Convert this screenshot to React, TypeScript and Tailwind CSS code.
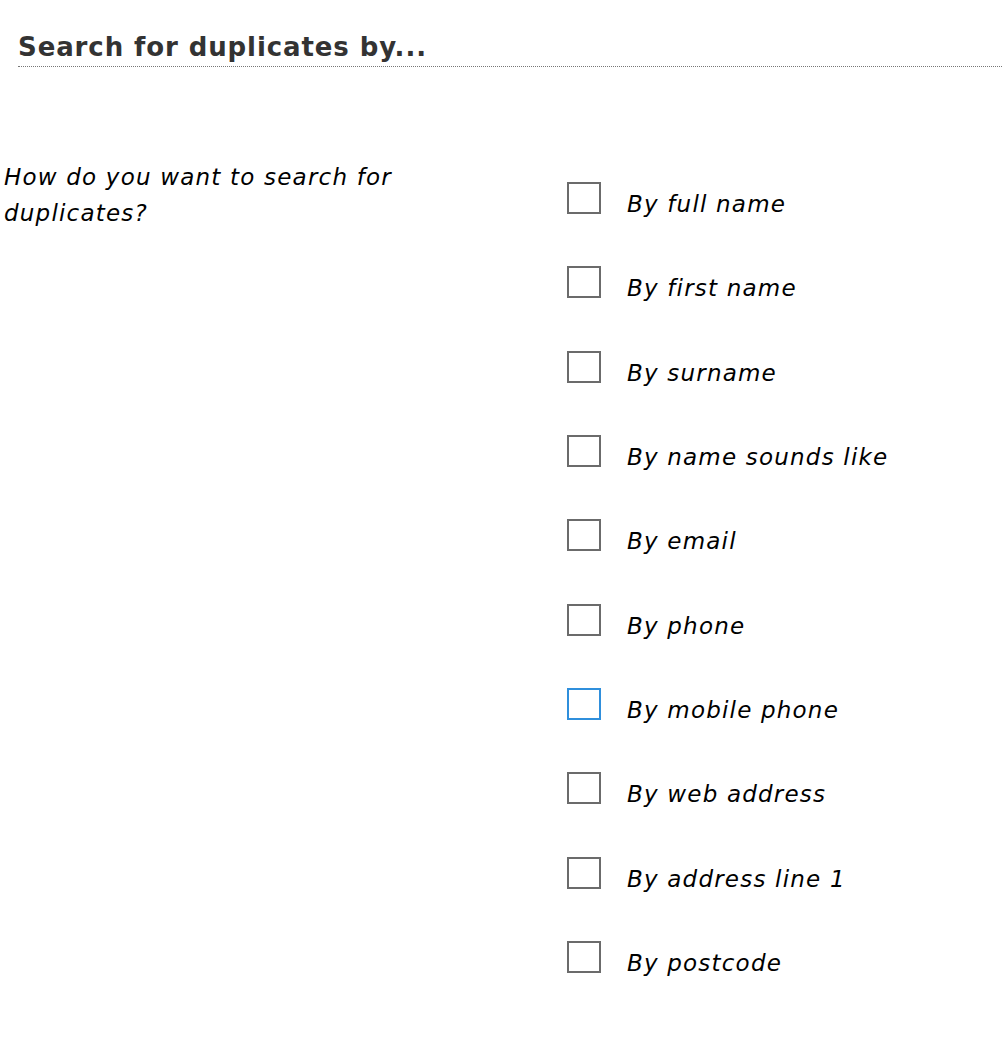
import React, { useState } from "react"

const options = [
    "By full name",
    "By first name",
    "By surname",
    "By name sounds like",
    "By email",
    "By phone",
    "By mobile phone",
    "By web address",
    "By address line 1",
    "By postcode",
]

// single checkbox row
const CheckRow: React.FC<{ label: string; focused?: boolean }> = ({ label, focused }) => {
    const [checked, setChecked] = useState(false)

    return (
        <label className="flex items-start h-[84.33px] cursor-pointer">
            <span
                onClick={() => setChecked(!checked)}
                className={`flex justify-center items-center w-[34px] h-[32px] border-2 bg-white ${
                    focused ? "border-[#2f8fdc]" : "border-[#6b6b6b]"
                }`}
            >
                {checked && <span className="block w-[15px] h-[15px] bg-[#333333]" />}
            </span>
            <span className="ml-[26px] mt-[6px] text-[23px] leading-[32px] tracking-[1.2px] italic text-black">
                {label}
            </span>
        </label>
    )
}

export default function App() {
    return (
        <div className="w-[1002px] h-[1053px] bg-white font-['Verdana','DejaVu_Sans',sans-serif]">
            <div className="pt-[30px] pl-[18px]">
                <h2 className="text-[26px] leading-[34px] tracking-[0.9px] font-bold text-[#333333] pb-[2px] border-b border-dotted border-[#777777]">
                    Search for duplicates by...
                </h2>
            </div>
            <div className="flex mt-[92px]">
                <div className="w-[567px] pl-[4px] pr-[110px] text-[23px] leading-[36px] tracking-[1.2px] italic text-black">
                    How do you want to search for duplicates?
                </div>
                <div className="flex flex-col mt-[23px]">
                    {options.map((item, index) => (
                        <CheckRow key={index} label={item} focused={index === 6} />
                    ))}
                </div>
            </div>
        </div>
    )
}
